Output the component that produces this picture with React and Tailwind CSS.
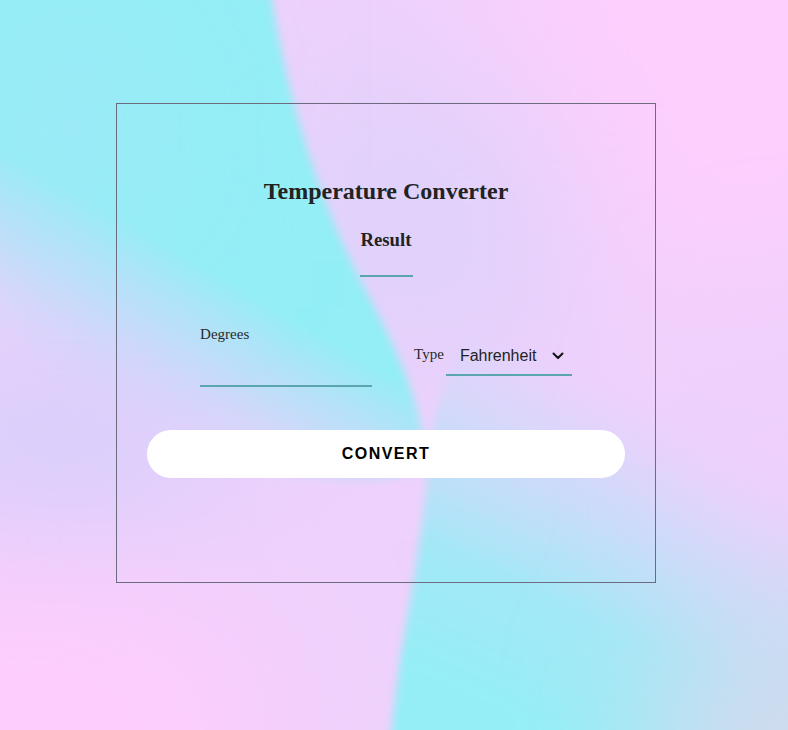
import React from "react";

function Background() {
  return (
    <svg className="absolute inset-0" width="788" height="730" viewBox="0 0 788 730" aria-hidden="true">
      <defs>
        <filter id="soft" x="-50%" y="-50%" width="200%" height="200%">
          <feGaussianBlur stdDeviation="70" />
        </filter>
        <filter id="edge" x="-20%" y="-20%" width="140%" height="140%">
          <feGaussianBlur stdDeviation="4" />
        </filter>
        <linearGradient id="topCyan" gradientUnits="userSpaceOnUse" x1="175" y1="250" x2="90" y2="398">
          <stop offset="0" stopColor="#93eef6" stopOpacity="1" />
          <stop offset="0.45" stopColor="#a6e6f7" stopOpacity="0.6" />
          <stop offset="1" stopColor="#c4d8f9" stopOpacity="0" />
        </linearGradient>
        <linearGradient id="leftFade" gradientUnits="userSpaceOnUse" x1="260" y1="0" x2="0" y2="0">
          <stop offset="0" stopColor="#a4e6f8" stopOpacity="0" />
          <stop offset="1" stopColor="#aee3f8" stopOpacity="0.5" />
        </linearGradient>
        <linearGradient id="botCyan" gradientUnits="userSpaceOnUse" x1="480" y1="700" x2="620" y2="390">
          <stop offset="0" stopColor="#95eef6" stopOpacity="1" />
          <stop offset="0.35" stopColor="#9aebf6" stopOpacity="0.9" />
          <stop offset="0.7" stopColor="#b6e2f8" stopOpacity="0.55" />
          <stop offset="1" stopColor="#c6dcf8" stopOpacity="0" />
        </linearGradient>
      </defs>
      <rect x="0" y="0" width="788" height="730" fill="#eed1fc" />
      <g filter="url(#soft)">
        <ellipse cx="720" cy="60" rx="260" ry="230" fill="#fdcffd" />
        <ellipse cx="20" cy="730" rx="260" ry="180" fill="#fdcdfd" />
        <ellipse cx="420" cy="220" rx="160" ry="160" fill="#e0d2fb" />
        <ellipse cx="60" cy="440" rx="170" ry="90" fill="#d6cffb" />
      </g>
      <g filter="url(#edge)">
        <path
          d="M-20,-20 L268,-20 L272,0 C290,110 320,200 360,280 C395,345 420,400 428,460 C400,500 250,480 -20,430 Z"
          fill="url(#topCyan)"
        />
        <path
          d="M428,460 C425,520 410,600 400,660 C395,700 392,720 390,750 L800,750 L800,300 L500,300 C450,350 430,420 428,460 Z"
          fill="url(#botCyan)"
        />
      </g>
      <rect x="0" y="0" width="300" height="260" fill="url(#leftFade)" filter="url(#soft)" />
      <g filter="url(#soft)">
        <ellipse cx="800" cy="430" rx="90" ry="120" fill="#efcffc" />
        <ellipse cx="800" cy="740" rx="150" ry="120" fill="#d6d9ee" />
      </g>
    </svg>
  );
}

export default function App() {
  return (
    <div className="relative w-[788px] h-[730px] overflow-hidden">
      <Background />
      <div className="relative flex flex-col pt-[103px]">
        <div className="ml-[116px] w-[540px] h-[480px] border border-[#6c6c7e] flex flex-col items-center text-[#222]">
          <h2 className="mt-[73px] font-['Liberation_Serif',serif] font-bold text-[24px] leading-[28px]">
            Temperature Converter
          </h2>
          <h3 className="mt-[24px] font-['Liberation_Serif',serif] font-bold text-[18.72px] leading-[22px]">
            Result
          </h3>
          <div className="mt-[24px] w-[53px] h-[2px] bg-[#5aa5ae]" />
          <div className="mt-[49px] flex items-start">
            <div className="flex flex-col w-[172px]">
              <label className="font-['Liberation_Serif',serif] text-[15px] leading-[17px] text-[#2a2a2a]">
                Degrees
              </label>
              <input
                type="text"
                className="h-[44px] w-[172px] bg-transparent border-0 border-b-2 border-[#5aa5ae] outline-none"
              />
            </div>
            <div className="ml-[42px] mt-[18px] flex items-start">
              <span className="mt-[2px] font-['Liberation_Serif',serif] text-[15px] leading-[17px] text-[#2a2a2a]">
                Type
              </span>
              <div className="ml-[2px] w-[126px] h-[32px] border-b-2 border-[#5aa5ae] flex items-start pl-[14px] pr-[8px] pt-[3px]">
                <span className="flex-1 font-['Liberation_Sans',Arial,sans-serif] text-[16px] leading-[18px] text-[#222]">
                  Fahrenheit
                </span>
                <svg width="12" height="8" viewBox="0 0 12 8" className="mt-[5px]">
                  <polyline points="1.5,1.5 6,6 10.5,1.5" fill="none" stroke="#111" strokeWidth="2" strokeLinecap="round" strokeLinejoin="round" />
                </svg>
              </div>
            </div>
          </div>
          <button className="mt-[43px] w-[478px] h-[48px] rounded-full bg-white font-['Liberation_Sans',Arial,sans-serif] font-bold text-[16px] tracking-[1.5px] text-black">
            CONVERT
          </button>
        </div>
      </div>
    </div>
  );
}
